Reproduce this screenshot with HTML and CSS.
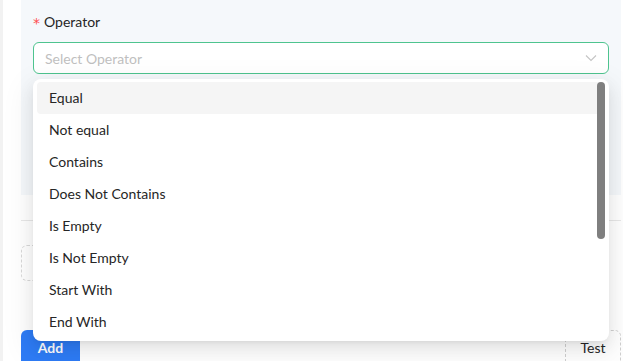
FILE: index.html
```html
<!DOCTYPE html>
<html lang="en">

<head>
    <meta charset="UTF-8">
    <meta name="viewport" content="width=device-width, initial-scale=1.0">
    <title>Condition Editor</title>
    <link rel="stylesheet" href="styles.css">
</head>

<body>

    <div class="page">
        <!-- Condition panel -->
        <div class="panel">
            <label class="field-label"><span class="required">*</span>Operator</label>
            <div class="select">
                <span class="placeholder">Select Operator</span>
                <svg class="chevron" width="12" height="12" viewBox="0 0 12 12">
                    <path d="M1 3.5 L6 8.5 L11 3.5" fill="none" stroke="#c4c4c4" stroke-width="1.1"/>
                </svg>
            </div>
        </div>

        <div class="divider"></div>

        <div class="dashed-box"></div>

        <div class="actions">
            <button class="btn-add">Add</button>
            <button class="btn-test">Test</button>
        </div>

        <!-- Operator dropdown -->
        <div class="dropdown">
            <div class="option active">Equal</div>
            <div class="option">Not equal</div>
            <div class="option">Contains</div>
            <div class="option">Does Not Contains</div>
            <div class="option">Is Empty</div>
            <div class="option">Is Not Empty</div>
            <div class="option">Start With</div>
            <div class="option">End With</div>
            <div class="scrollbar"></div>
        </div>
    </div>

</body>

</html>
```

FILE: styles.css
```css
/* Resetting some default styles */
* {
    margin: 0;
    padding: 0;
    box-sizing: border-box;
}

body {
    font-family: 'Lato', 'Roboto', sans-serif;
    background-color: #fff;
    color: #262626;
    font-size: 14px;
    overflow: hidden;
}

.page {
    position: relative;
    height: 361px;
    padding-left: 18px;
    padding-right: 2px;
    border-left: 3px solid #f2f2f2;
}

/* Panel with the select */
.panel {
    background-color: #f5f8fb;
    padding: 14px 12px 0;
    height: 195px;
}

.field-label {
    display: block;
    height: 16px;
    line-height: 16px;
    color: #262626;
    margin-bottom: 12px;
}

.required {
    position: relative;
    top: 1px;
    font-family: 'DejaVu Sans', sans-serif;
    font-size: 14px;
    line-height: 0;
    color: #ff4d4f;
    margin-right: 4px;
}

.select {
    display: flex;
    align-items: center;
    justify-content: space-between;
    height: 32px;
    padding: 0 11px;
    background-color: #fff;
    border: 1px solid #4ec48f;
    border-radius: 6px;
}

.placeholder {
    color: #bfbfbf;
}

.divider {
    margin-top: 25px;
    border-top: 1px solid #e8e8e8;
}

.dashed-box {
    margin-top: 24px;
    width: 260px;
    height: 36px;
    border: 1px dashed #d9d9d9;
    border-radius: 6px;
}

.actions {
    display: flex;
    justify-content: space-between;
    margin-top: 49px;
}

.actions button {
    height: 34px;
    font-family: inherit;
    font-size: 14px;
    border-radius: 6px 6px 0 0;
}

.btn-add {
    width: 59px;
    background-color: #2e7cf6;
    color: #fff;
    font-weight: bold;
    border: none;
}

.btn-test {
    width: 56px;
    background-color: #fff;
    color: #262626;
    border: 1px dashed #d0d0d0;
}

/* Dropdown menu */
.dropdown {
    position: absolute;
    left: 30px;
    top: 79px;
    width: 576px;
    height: 262px;
    padding: 3px 4px;
    background-color: #fff;
    border-radius: 8px;
    box-shadow: 0 6px 16px 0 rgba(0, 0, 0, 0.08),
        0 3px 6px -4px rgba(0, 0, 0, 0.12),
        0 9px 28px 8px rgba(0, 0, 0, 0.05);
    overflow: hidden;
}

.option {
    height: 32px;
    line-height: 32px;
    padding: 0 12px;
    border-radius: 4px;
    color: #262626;
}

.option.active {
    background-color: #f5f5f5;
}

.scrollbar {
    position: absolute;
    top: 3px;
    right: 4px;
    width: 8px;
    height: 157px;
    border-radius: 4px;
    background-color: #7f7f7f;
}
```
